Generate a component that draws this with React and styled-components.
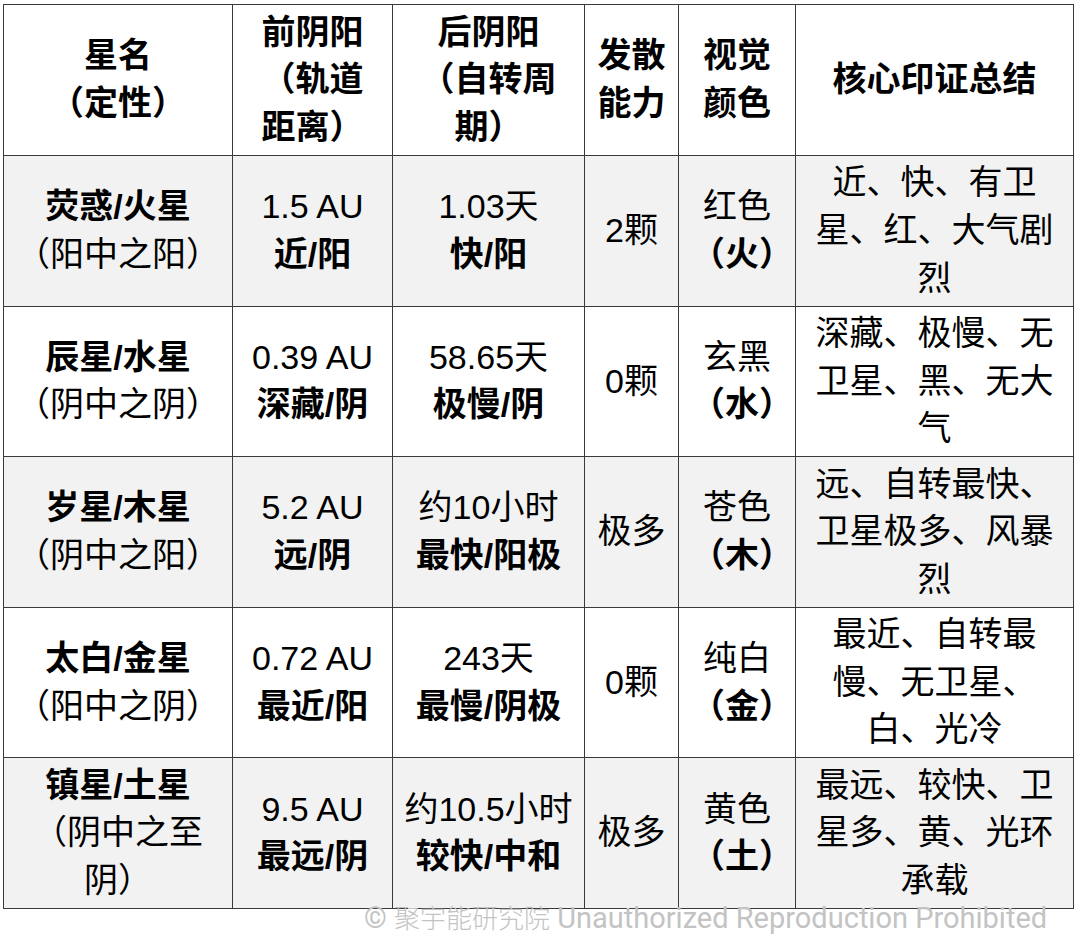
import React from 'react'
import styled, { createGlobalStyle } from 'styled-components'

const GlobalStyle = createGlobalStyle`
  html, body {
    margin: 0;
    padding: 0;
    background: #fff;
  }
  body {
    font-family: "Liberation Sans", "Noto Sans CJK SC", sans-serif;
    color: #000;
  }
`

const Page = styled.div`
  position: relative;
  width: 1076px;
  height: 936px;
  padding: 4px 0 0 3px;
  box-sizing: border-box;
  overflow: hidden;
`

const Table = styled.table`
  width: 1071px;
  border-collapse: collapse;
  table-layout: fixed;
  font-size: 34px;
  line-height: 47.6px;
`

const Row = styled.tr`
  height: ${p => p.$h}px;
  background: ${p => (p.$shade ? '#f2f2f2' : '#fff')};
`

const HeadCell = styled.th`
  border: 1px solid #3a3a3a;
  padding: 0 ${p => (p.$tight ? 11 : 12)}px;
  text-align: center;
  vertical-align: middle;
  font-weight: 700;
`

const Cell = styled.td`
  border: 1px solid #3a3a3a;
  padding: 0 ${p => (p.$tight ? 11 : 12)}px;
  text-align: center;
  vertical-align: middle;
  font-weight: 400;
`

const Line = styled.div`
  font-weight: ${p => (p.$bold ? 700 : 400)};
  white-space: ${p => (p.$nowrap ? 'nowrap' : 'normal')};
`

const Watermark = styled.div`
  position: absolute;
  left: 364px;
  top: 902px;
  font-family: Roboto, "Noto Sans CJK SC", sans-serif;
  font-size: 29px;
  line-height: 29px;
  color: #c3c3c3;
  white-space: nowrap;
  pointer-events: none;
`

const WatermarkCjk = styled.span`
  font-family: "Noto Sans CJK SC", sans-serif;
  font-size: 26px;
  font-weight: 300;
`

const columns = [229, 160, 192, 94, 117, 278]

const headers = [
  <>星名<br />（定性）</>,
  '前阴阳（轨道距离）',
  '后阴阳（自转周期）',
  '发散能力',
  '视觉颜色',
  '核心印证总结',
]

const planets = [
  {
    name: '荧惑/火星', nature: '（阳中之阳）',
    dist: '1.5 AU', distTag: '近/阳',
    spin: '1.03天', spinTag: '快/阳',
    moons: '2颗', hue: '红色', element: '（火）',
    summary: '近、快、有卫星、红、大气剧烈',
  },
  {
    name: '辰星/水星', nature: '（阴中之阴）',
    dist: '0.39 AU', distTag: '深藏/阴',
    spin: '58.65天', spinTag: '极慢/阴',
    moons: '0颗', hue: '玄黑', element: '（水）',
    summary: '深藏、极慢、无卫星、黑、无大气',
  },
  {
    name: '岁星/木星', nature: '（阴中之阳）',
    dist: '5.2 AU', distTag: '远/阴',
    spin: '约10小时', spinTag: '最快/阳极',
    moons: '极多', hue: '苍色', element: '（木）',
    summary: '远、自转最快、卫星极多、风暴烈',
  },
  {
    name: '太白/金星', nature: '（阳中之阴）',
    dist: '0.72 AU', distTag: '最近/阳',
    spin: '243天', spinTag: '最慢/阴极',
    moons: '0颗', hue: '纯白', element: '（金）',
    summary: '最近、自转最慢、无卫星、白、光冷',
  },
  {
    name: '镇星/土星', nature: '（阴中之至阴）',
    dist: '9.5 AU', distTag: '最远/阴',
    spin: '约10.5小时', spinTag: '较快/中和',
    moons: '极多', hue: '黄色', element: '（土）',
    summary: '最远、较快、卫星多、黄、光环承载',
  },
]

const App = () => {
  return (
    <Page lang="zh-CN">
      <GlobalStyle />
      <Table>
        <colgroup>
          {columns.map((w, i) => <col key={i} style={{ width: w }} />)}
        </colgroup>
        <thead>
          <Row $h={151}>
            {headers.map((h, i) => <HeadCell key={i} $tight={i === 2}>{h}</HeadCell>)}
          </Row>
        </thead>
        <tbody>
          {planets.map((p, i) => (
            <Row key={p.name} $h={150.6} $shade={i % 2 === 0}>
              <Cell>
                <Line $bold>{p.name}</Line>
                <Line>{p.nature}</Line>
              </Cell>
              <Cell>
                <Line>{p.dist}</Line>
                <Line $bold>{p.distTag}</Line>
              </Cell>
              <Cell $tight>
                <Line $nowrap>{p.spin}</Line>
                <Line $bold>{p.spinTag}</Line>
              </Cell>
              <Cell>{p.moons}</Cell>
              <Cell>
                <Line>{p.hue}</Line>
                <Line $bold>{p.element}</Line>
              </Cell>
              <Cell>{p.summary}</Cell>
            </Row>
          ))}
        </tbody>
      </Table>
      <Watermark>
        © <WatermarkCjk>聚宇能研究院</WatermarkCjk> Unauthorized Reproduction Prohibited
      </Watermark>
    </Page>
  )
}

export default App
